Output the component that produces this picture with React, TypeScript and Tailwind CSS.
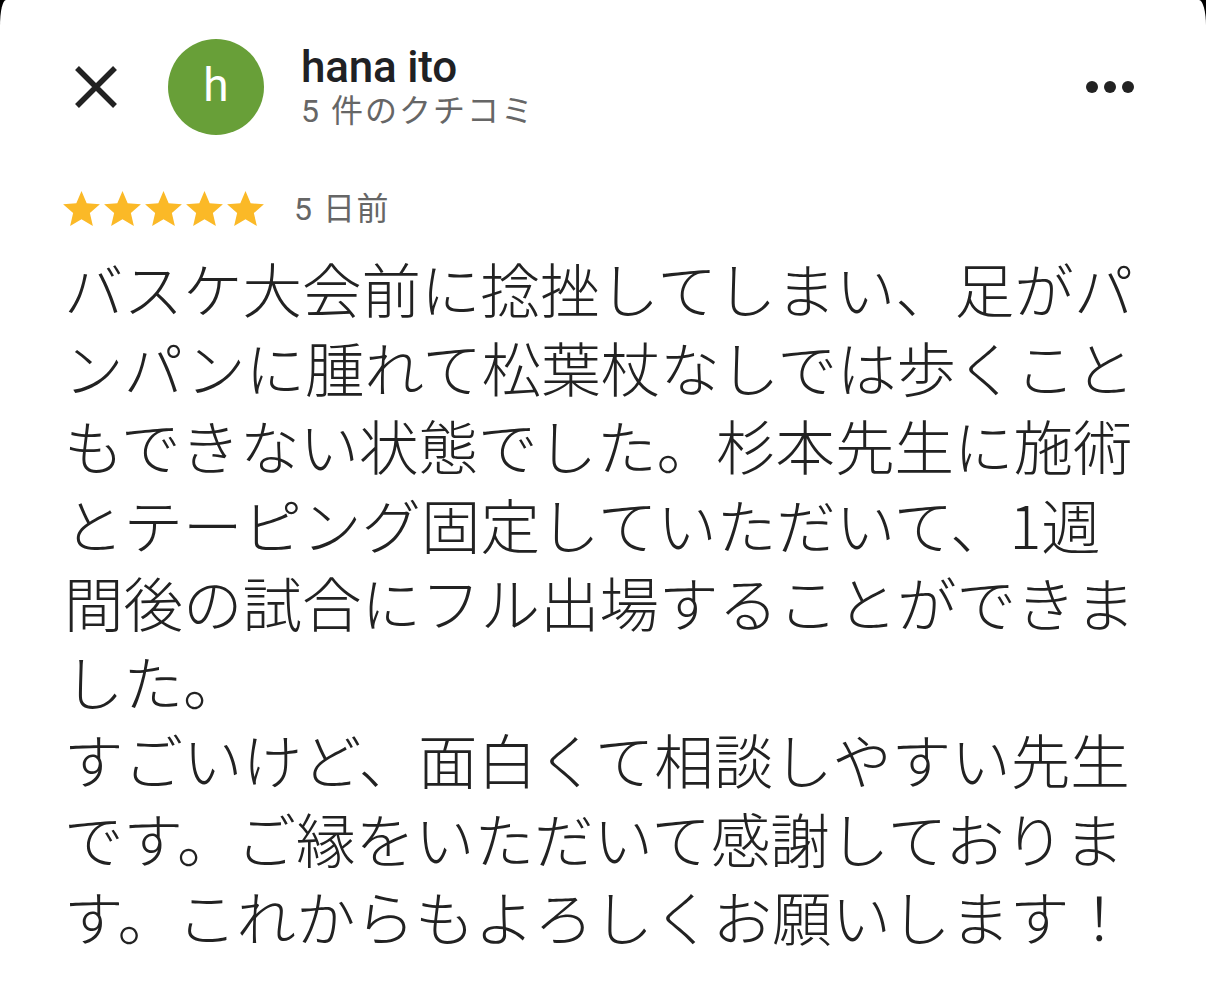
import React from "react";

const lines = [
  "バスケ大会前に捻挫してしまい、足がパ",
  "ンパンに腫れて松葉杖なしでは歩くこと",
  "もできない状態でした。杉本先生に施術",
  "とテーピング固定していただいて、1週",
  "間後の試合にフル出場することができま",
  "した。",
  "すごいけど、面白くて相談しやすい先生",
  "です。ご縁をいただいて感謝しておりま",
  "す。これからもよろしくお願いします！",
];

function Star() {
  return (
    <svg viewBox="2 2 20 19" className="w-[37px] h-[35px]" fill="#fbb927">
      <path d="M12 17.27L18.18 21l-1.64-7.03L22 9.24l-7.19-.61L12 2 9.19 8.63 2 9.24l5.46 4.73L5.82 21z" />
    </svg>
  );
}

export default function App() {
  return (
    <div className="w-[1206px] h-[982px] bg-black overflow-hidden">
      <div
        className="w-full h-full bg-white pt-[39px] rounded-tl-[6px_26px] rounded-tr-[7px_26px]"
        style={{ fontFamily: "Roboto, 'Noto Sans CJK JP', sans-serif" }}
      >
        <div className="flex items-center h-[96px] pl-[74px] pr-[72px]">
          <svg viewBox="0 0 44 44" className="w-[44px] h-[44px] shrink-0">
            <path d="M3 3L41 41M41 3L3 41" stroke="#222222" strokeWidth="5.5" strokeLinecap="butt" />
          </svg>
          <div className="ml-[50px] w-[96px] h-[96px] rounded-full bg-[#689f38] flex items-center justify-center text-white text-[46px] leading-none pb-[4px]">
            h
          </div>
          <div className="ml-[37px] flex flex-col">
            <div className="text-[44px] leading-[48px] font-medium text-[#202124] tracking-[-0.2px]">hana ito</div>
            <div className="text-[32px] leading-[40px] text-[#666666] tracking-[2px]">5 件のクチコミ</div>
          </div>
          <div className="ml-auto flex items-center gap-[6px]">
            <span className="w-[12px] h-[12px] rounded-full bg-[#222222]" />
            <span className="w-[12px] h-[12px] rounded-full bg-[#222222]" />
            <span className="w-[12px] h-[12px] rounded-full bg-[#222222]" />
          </div>
        </div>

        <div className="flex items-center mt-[56px] pl-[63px]">
          <div className="flex items-center gap-[4px]">
            <Star />
            <Star />
            <Star />
            <Star />
            <Star />
          </div>
          <span className="ml-[30px] text-[32px] leading-none text-[#666666] tracking-[1.5px]">5 日前</span>
        </div>

        <div
          className="mt-[22px] pl-[64px] text-[59.5px] leading-[78.5px] text-[#222222] whitespace-nowrap font-light"
          style={{ fontFamily: "'Noto Sans CJK JP', sans-serif" }}
        >
          {lines.map((l, i) => (
            <div key={i}>{l}</div>
          ))}
        </div>
      </div>
    </div>
  );
}
